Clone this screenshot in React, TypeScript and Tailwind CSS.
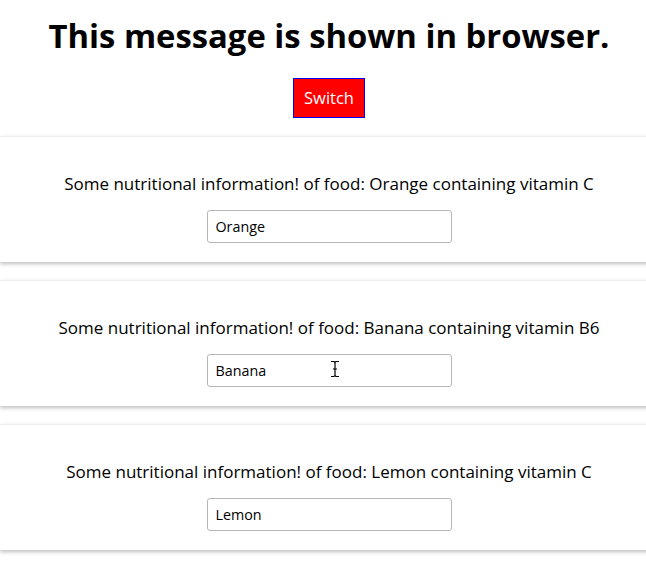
import React from "react";

const foods = [
  { name: "Orange", vitamin: "C" },
  { name: "Banana", vitamin: "B6" },
  { name: "Lemon", vitamin: "C" },
];

function Cursor() {
  return (
    <svg className="absolute left-[123px] top-[6px]" width="10" height="18" viewBox="0 0 10 18">
      <path d="M1 1.5 H4 L5 2.5 L6 1.5 H9 M5 2.5 V15.5 M1 16.5 H4 L5 15.5 L6 16.5 H9 M3 9 H7" fill="none" stroke="#fff" strokeWidth="3" />
      <path d="M1 1.5 H4 L5 2.5 L6 1.5 H9 M5 2.5 V15.5 M1 16.5 H4 L5 15.5 L6 16.5 H9 M3 9 H7" fill="none" stroke="#000" strokeWidth="1.2" />
    </svg>
  );
}

export default function App() {
  return (
    <div className="w-[646px] overflow-hidden bg-white pb-[14px] text-black" style={{ fontFamily: '"Open Sans", "Noto Sans", sans-serif' }}>
      <div className="w-[658px]">
        <h1 className="pt-[14px] text-center text-[32.8px] font-bold leading-[44px]">This message is shown in browser.</h1>
        <div className="mt-[20px] flex justify-center">
          <button className="h-[40px] w-[72px] border border-[#0000ff] bg-[#ff0000] text-[16.5px] text-white">Switch</button>
        </div>
        <div className="mt-[18px] flex flex-col gap-[18px]">
          {foods.map((f) => (
            <div key={f.name} className="flex flex-col items-center border-t border-[#eeeeee] bg-white pb-[19px] pt-[35px] shadow-[0_2px_4px_rgba(0,0,0,0.25)]">
              <p className="text-[17px] leading-[24px]">
                Some nutritional information! of food: {f.name} containing vitamin {f.vitamin}
              </p>
              <div className="relative mt-[14px]">
                <input
                  defaultValue={f.name}
                  className="h-[33px] w-[245px] rounded-[3px] border border-[#b8b8b8] px-[8px] text-[14.3px] outline-none"
                />
                {f.name === "Banana" && <Cursor />}
              </div>
            </div>
          ))}
        </div>
      </div>
    </div>
  );
}
